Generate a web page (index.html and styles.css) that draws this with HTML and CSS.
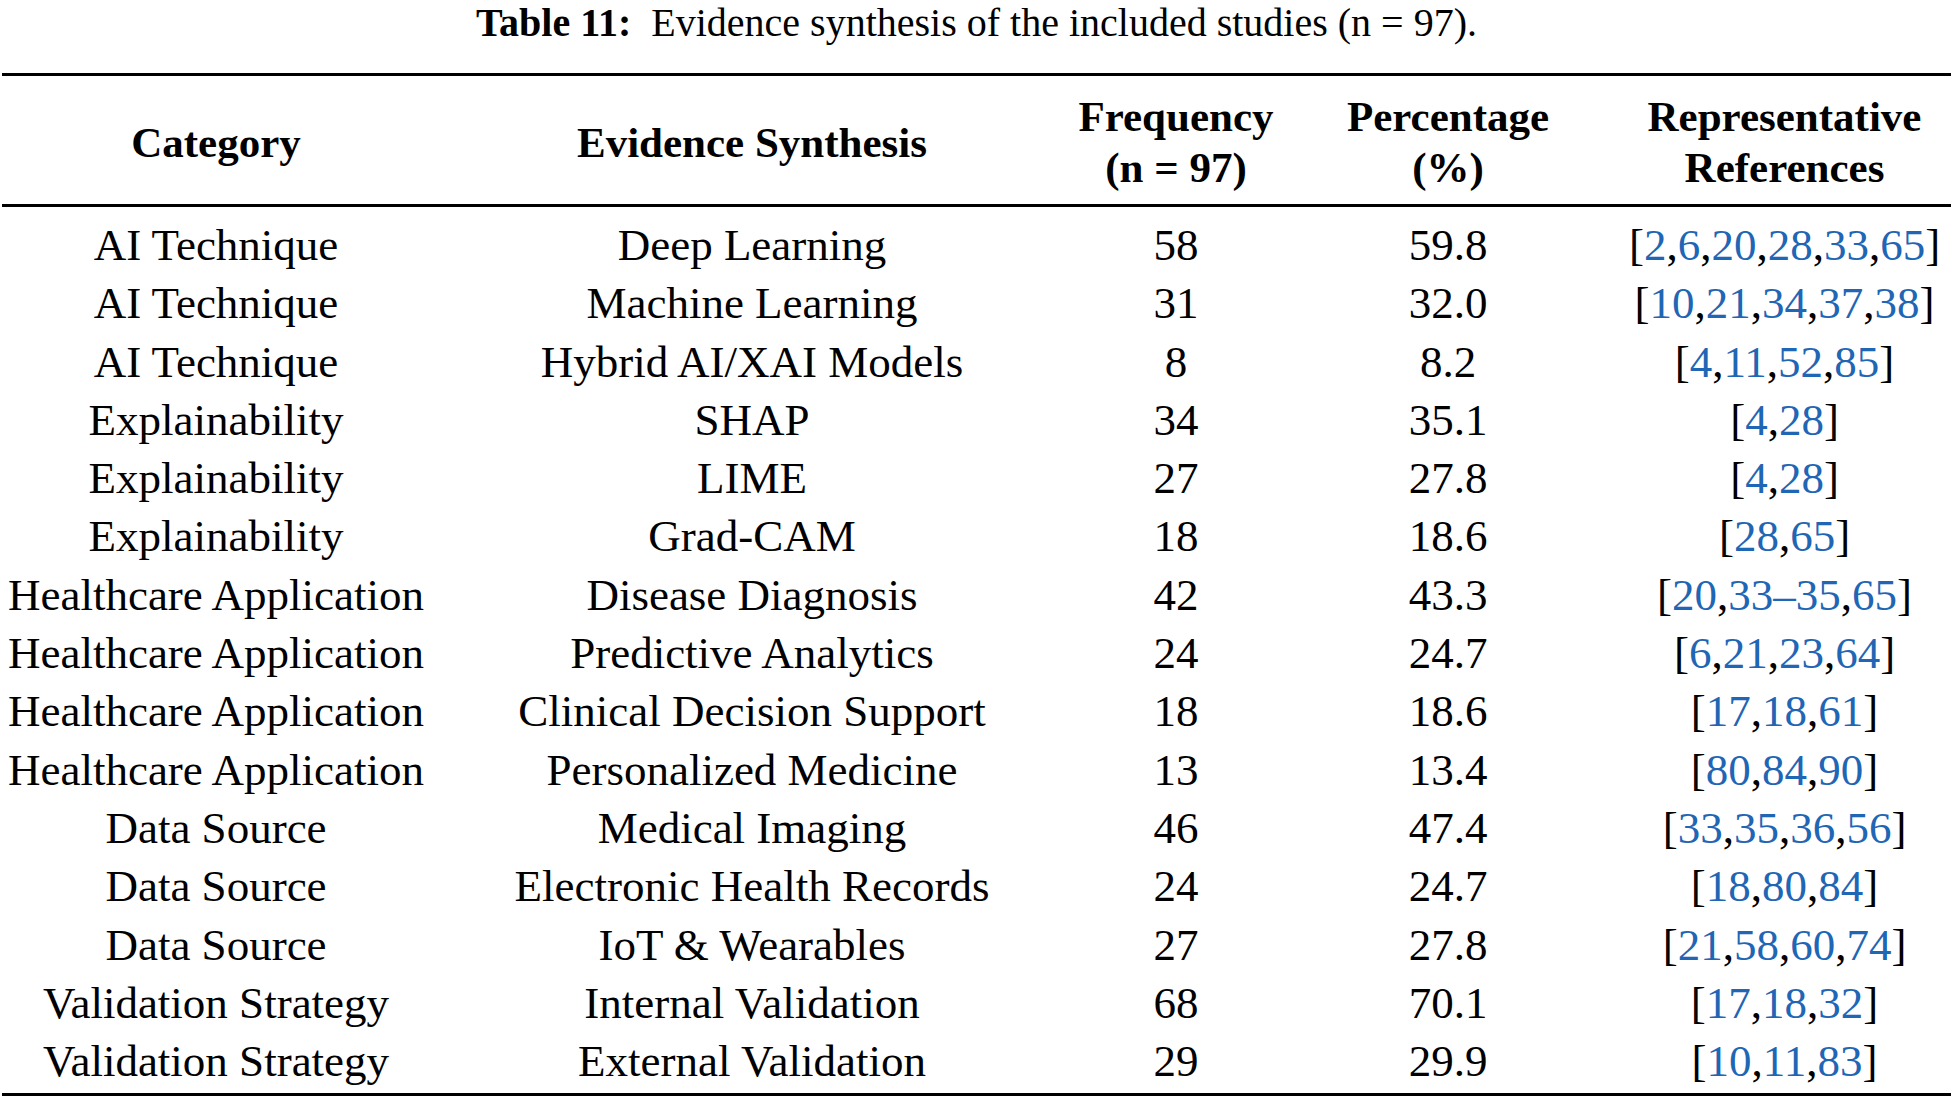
FILE: index.html
```html
<!DOCTYPE html>
<html lang="en">
<head>
    <meta charset="UTF-8">
    <meta name="viewport" content="width=device-width, initial-scale=1.0">
    <title>Table 11: Evidence synthesis</title>
    <link rel="stylesheet" href="styles.css">
</head>
<body>

    <p class="caption"><b>Table 11:</b>&nbsp; Evidence synthesis of the included studies (n = 97).</p>

    <table class="synthesis">
        <colgroup>
            <col class="col-cat">
            <col class="col-ev">
            <col class="col-freq">
            <col class="col-pct">
            <col class="col-ref">
        </colgroup>
        <thead>
            <tr>
                <th>Category</th>
                <th>Evidence Synthesis</th>
                <th>Frequency<br>(n = 97)</th>
                <th>Percentage<br>(%)</th>
                <th>Representative<br>References</th>
            </tr>
        </thead>
        <tbody>
            <tr>
                <td>AI Technique</td>
                <td>Deep Learning</td>
                <td>58</td>
                <td>59.8</td>
                <td>[<a>2</a>,<a>6</a>,<a>20</a>,<a>28</a>,<a>33</a>,<a>65</a>]</td>
            </tr>
            <tr>
                <td>AI Technique</td>
                <td>Machine Learning</td>
                <td>31</td>
                <td>32.0</td>
                <td>[<a>10</a>,<a>21</a>,<a>34</a>,<a>37</a>,<a>38</a>]</td>
            </tr>
            <tr>
                <td>AI Technique</td>
                <td>Hybrid AI/XAI Models</td>
                <td>8</td>
                <td>8.2</td>
                <td>[<a>4</a>,<a>11</a>,<a>52</a>,<a>85</a>]</td>
            </tr>
            <tr>
                <td>Explainability</td>
                <td>SHAP</td>
                <td>34</td>
                <td>35.1</td>
                <td>[<a>4</a>,<a>28</a>]</td>
            </tr>
            <tr>
                <td>Explainability</td>
                <td>LIME</td>
                <td>27</td>
                <td>27.8</td>
                <td>[<a>4</a>,<a>28</a>]</td>
            </tr>
            <tr>
                <td>Explainability</td>
                <td>Grad-CAM</td>
                <td>18</td>
                <td>18.6</td>
                <td>[<a>28</a>,<a>65</a>]</td>
            </tr>
            <tr>
                <td>Healthcare Application</td>
                <td>Disease Diagnosis</td>
                <td>42</td>
                <td>43.3</td>
                <td>[<a>20</a>,<a>33&ndash;35</a>,<a>65</a>]</td>
            </tr>
            <tr>
                <td>Healthcare Application</td>
                <td>Predictive Analytics</td>
                <td>24</td>
                <td>24.7</td>
                <td>[<a>6</a>,<a>21</a>,<a>23</a>,<a>64</a>]</td>
            </tr>
            <tr>
                <td>Healthcare Application</td>
                <td>Clinical Decision Support</td>
                <td>18</td>
                <td>18.6</td>
                <td>[<a>17</a>,<a>18</a>,<a>61</a>]</td>
            </tr>
            <tr>
                <td>Healthcare Application</td>
                <td>Personalized Medicine</td>
                <td>13</td>
                <td>13.4</td>
                <td>[<a>80</a>,<a>84</a>,<a>90</a>]</td>
            </tr>
            <tr>
                <td>Data Source</td>
                <td>Medical Imaging</td>
                <td>46</td>
                <td>47.4</td>
                <td>[<a>33</a>,<a>35</a>,<a>36</a>,<a>56</a>]</td>
            </tr>
            <tr>
                <td>Data Source</td>
                <td>Electronic Health Records</td>
                <td>24</td>
                <td>24.7</td>
                <td>[<a>18</a>,<a>80</a>,<a>84</a>]</td>
            </tr>
            <tr>
                <td>Data Source</td>
                <td>IoT &amp; Wearables</td>
                <td>27</td>
                <td>27.8</td>
                <td>[<a>21</a>,<a>58</a>,<a>60</a>,<a>74</a>]</td>
            </tr>
            <tr>
                <td>Validation Strategy</td>
                <td>Internal Validation</td>
                <td>68</td>
                <td>70.1</td>
                <td>[<a>17</a>,<a>18</a>,<a>32</a>]</td>
            </tr>
            <tr>
                <td>Validation Strategy</td>
                <td>External Validation</td>
                <td>29</td>
                <td>29.9</td>
                <td>[<a>10</a>,<a>11</a>,<a>83</a>]</td>
            </tr>
        </tbody>
    </table>

</body>
</html>
```

FILE: styles.css
```css
/* Page */
body {
    margin: 0;
    padding: 0 2px;
    font-family: "Liberation Serif", "Times New Roman", serif;
    color: #000;
    background: #fff;
}

/* Caption */
.caption {
    margin: 0 0 28px;
    font-size: 40px;
    line-height: 45px;
    text-align: center;
}

/* Table */
.synthesis {
    width: 100%;
    border-collapse: collapse;
    table-layout: fixed;
    font-size: 45px;
}
.col-cat { width: 428px; }
.col-ev { width: 644px; }
.col-freq { width: 204px; }
.col-pct { width: 340px; }
.col-ref { width: auto; }

.synthesis th,
.synthesis td {
    padding: 0;
    text-align: center;
    white-space: nowrap;
}
.synthesis thead th {
    font-size: 43px;
    line-height: 51px;
    padding: 15px 0 11px;
    border-top: 3px solid #000;
    border-bottom: 3px solid #000;
    vertical-align: middle;
}
.synthesis td {
    line-height: 58.3px;
}
.synthesis tbody tr:first-child td {
    padding-top: 9px;
}
.synthesis tbody tr:last-child td {
    padding-bottom: 3px;
    border-bottom: 3px solid #000;
}

/* Reference numbers */
.synthesis a {
    color: #1f66b5;
    text-decoration: none;
}
```
